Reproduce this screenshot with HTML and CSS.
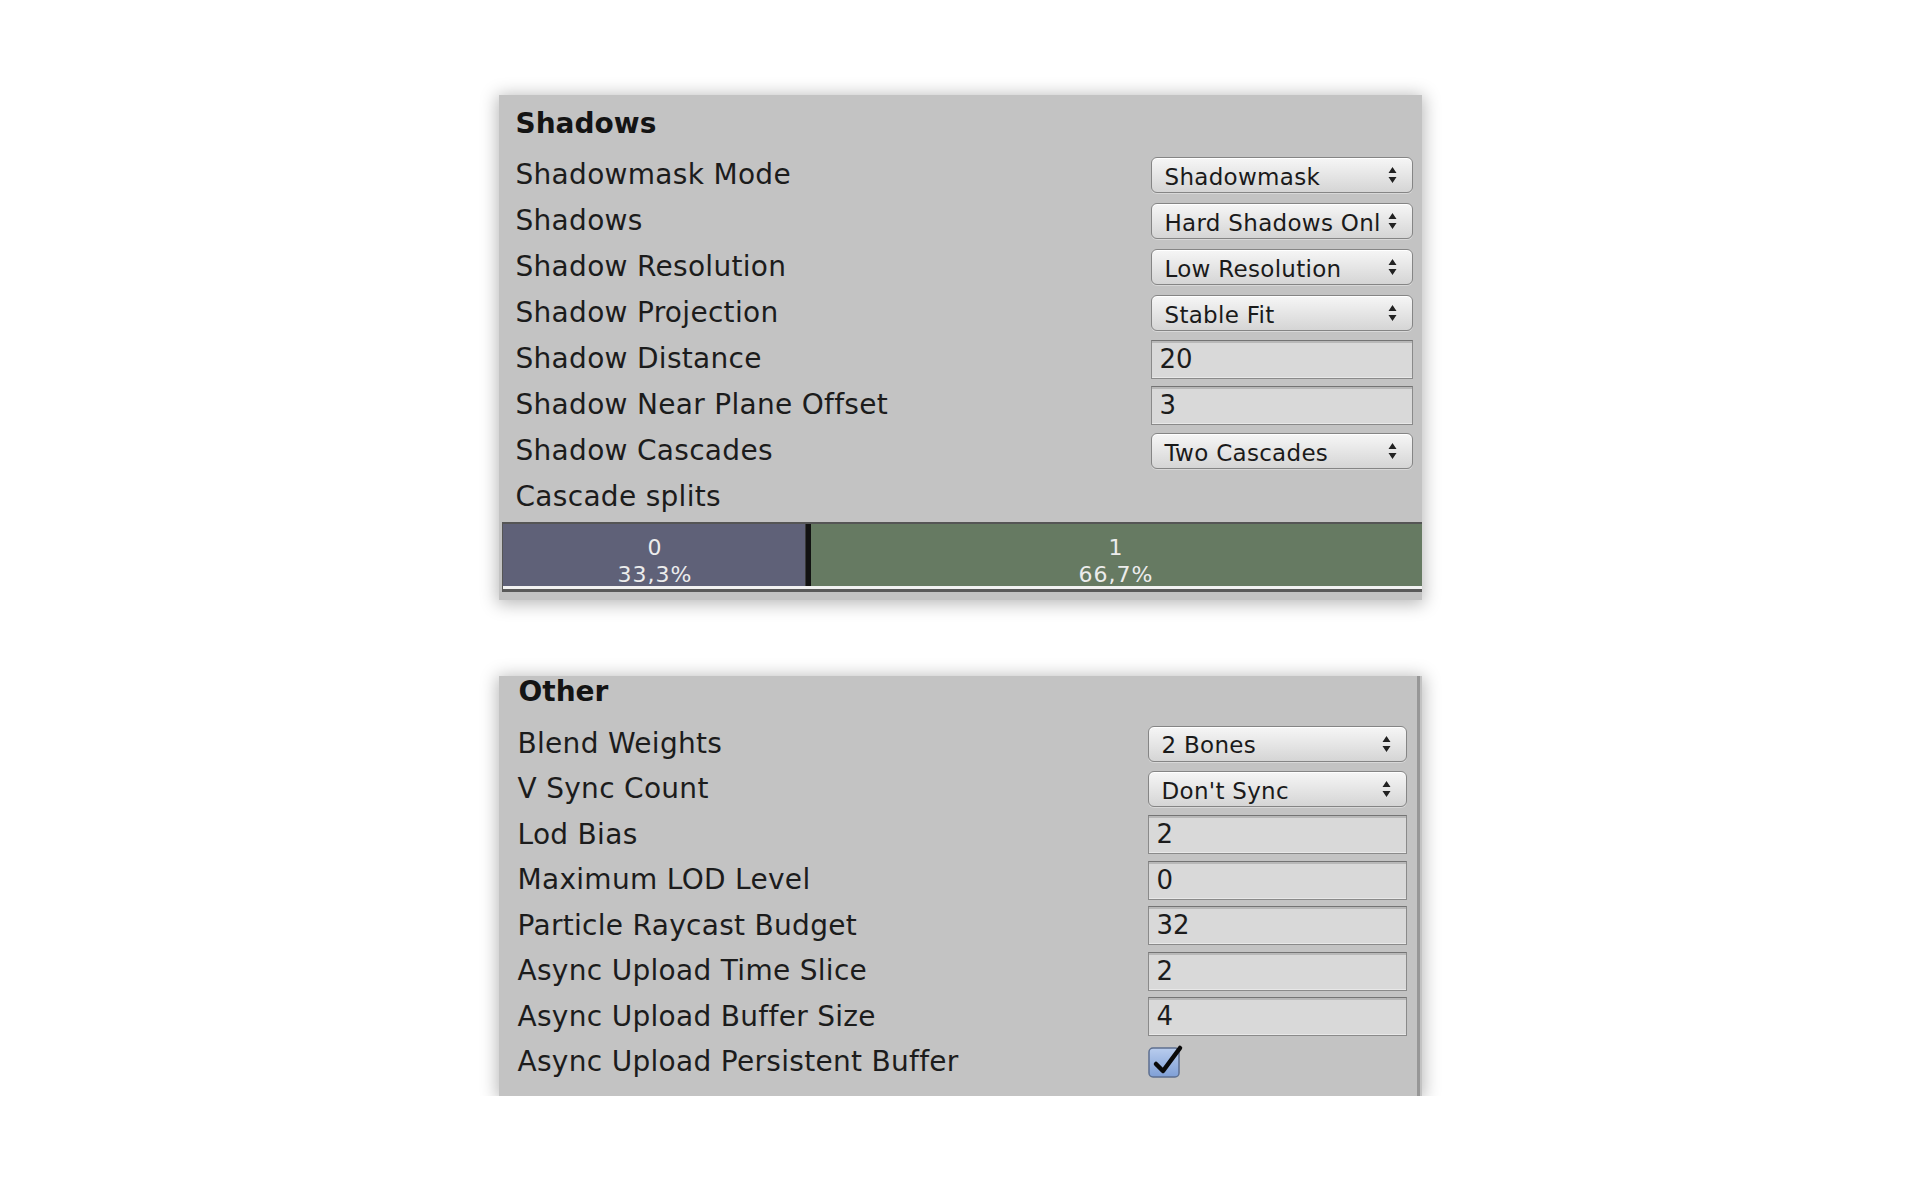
FILE: index.html
```html
<!DOCTYPE html>
<html>
<head>
<meta charset="utf-8">
<link rel="stylesheet" href="styles.css">
</head>
<body>
<div class="page">
  <section class="panel panel-shadows">
    <div class="header">Shadows</div>
    <div class="row"><span class="label">Shadowmask Mode</span><div class="select"><span>Shadowmask</span><svg class="arrows" width="9" height="16" viewBox="0 0 9 16"><path d="M4.5 0 L8.5 6 L0.5 6 Z M0.5 10 L8.5 10 L4.5 16 Z" fill="#222"/></svg></div></div>
    <div class="row"><span class="label">Shadows</span><div class="select"><span>Hard Shadows Onl</span><svg class="arrows" width="9" height="16" viewBox="0 0 9 16"><path d="M4.5 0 L8.5 6 L0.5 6 Z M0.5 10 L8.5 10 L4.5 16 Z" fill="#222"/></svg></div></div>
    <div class="row"><span class="label">Shadow Resolution</span><div class="select"><span>Low Resolution</span><svg class="arrows" width="9" height="16" viewBox="0 0 9 16"><path d="M4.5 0 L8.5 6 L0.5 6 Z M0.5 10 L8.5 10 L4.5 16 Z" fill="#222"/></svg></div></div>
    <div class="row"><span class="label">Shadow Projection</span><div class="select"><span>Stable Fit</span><svg class="arrows" width="9" height="16" viewBox="0 0 9 16"><path d="M4.5 0 L8.5 6 L0.5 6 Z M0.5 10 L8.5 10 L4.5 16 Z" fill="#222"/></svg></div></div>
    <div class="row"><span class="label">Shadow Distance</span><div class="field">20</div></div>
    <div class="row"><span class="label">Shadow Near Plane Offset</span><div class="field">3</div></div>
    <div class="row"><span class="label">Shadow Cascades</span><div class="select"><span>Two Cascades</span><svg class="arrows" width="9" height="16" viewBox="0 0 9 16"><path d="M4.5 0 L8.5 6 L0.5 6 Z M0.5 10 L8.5 10 L4.5 16 Z" fill="#222"/></svg></div></div>
    <div class="row"><span class="label">Cascade splits</span></div>
    <div class="cascade">
      <div class="cascade-track">
        <div class="seg seg-0" style="flex-grow:333"><span>0</span><span>33,3%</span></div>
        <div class="divider"></div>
        <div class="seg seg-1" style="flex-grow:667"><span>1</span><span>66,7%</span></div>
      </div>
    </div>
  </section>

  <section class="panel panel-other">
    <div class="header">Other</div>
    <div class="row"><span class="label">Blend Weights</span><div class="select"><span>2 Bones</span><svg class="arrows" width="9" height="16" viewBox="0 0 9 16"><path d="M4.5 0 L8.5 6 L0.5 6 Z M0.5 10 L8.5 10 L4.5 16 Z" fill="#222"/></svg></div></div>
    <div class="row"><span class="label">V Sync Count</span><div class="select"><span>Don't Sync</span><svg class="arrows" width="9" height="16" viewBox="0 0 9 16"><path d="M4.5 0 L8.5 6 L0.5 6 Z M0.5 10 L8.5 10 L4.5 16 Z" fill="#222"/></svg></div></div>
    <div class="row"><span class="label">Lod Bias</span><div class="field">2</div></div>
    <div class="row"><span class="label">Maximum LOD Level</span><div class="field">0</div></div>
    <div class="row"><span class="label">Particle Raycast Budget</span><div class="field">32</div></div>
    <div class="row"><span class="label">Async Upload Time Slice</span><div class="field">2</div></div>
    <div class="row"><span class="label">Async Upload Buffer Size</span><div class="field">4</div></div>
    <div class="row"><span class="label">Async Upload Persistent Buffer</span>
      <div class="check-slot">
        <svg class="checkbox" width="36" height="34" viewBox="0 0 36 34">
          <defs>
            <linearGradient id="cbg" x1="0" y1="0" x2="0" y2="1">
              <stop offset="0" stop-color="#b9cdee"/>
              <stop offset="1" stop-color="#7f9fd6"/>
            </linearGradient>
          </defs>
          <rect x="1" y="4" width="30" height="29" rx="4" fill="url(#cbg)" stroke="#5d6f90" stroke-width="1.5"/>
          <path d="M8 20 L15 27 L32 4" fill="none" stroke="#0a0a0a" stroke-width="4.5" stroke-linecap="round" stroke-linejoin="round"/>
        </svg>
      </div>
    </div>
  </section>
</div>
</body>
</html>
```

FILE: styles.css
```css
html, body {
  margin: 0;
  padding: 0;
  background: #ffffff;
}

body {
  font-family: "DejaVu Sans", Verdana, sans-serif;
  color: #1c1c1c;
}

.page {
  display: flex;
  flex-direction: column;
  align-items: center;
  gap: 76px;
  padding-top: 95px;
}

.panel {
  width: 923px;
  background: #c3c3c3;
  box-sizing: border-box;
  box-shadow: 0 2px 16px 2px rgba(0, 0, 0, 0.28);
}

.header {
  font-weight: bold;
  font-size: 28px;
  color: #141414;
}

.panel-shadows {
  padding-bottom: 8px;
}

.panel-shadows .header {
  height: 46px;
  line-height: 46px;
  margin-top: 6px;
  margin-bottom: 5px;
  padding-left: 17px;
}

.panel-shadows .row {
  height: 46px;
  padding: 0 9px 0 17px;
}

.panel-shadows .select,
.panel-shadows .field {
  width: 262px;
}

.panel-other {
  padding-bottom: 11px;
  box-shadow: inset -2px 0 0 #c3c3c3, inset -5px 0 0 #979797, 0 2px 16px 2px rgba(0, 0, 0, 0.28);
}

.panel-other .header {
  height: 32px;
  line-height: 32px;
  margin-bottom: 13px;
  padding-left: 20px;
}

.panel-other .row {
  height: 45.5px;
  padding: 0 15px 0 19px;
}

.panel-other .select,
.panel-other .field,
.panel-other .check-slot {
  width: 259px;
}

.row {
  display: flex;
  align-items: center;
  justify-content: space-between;
  box-sizing: border-box;
}

.label {
  font-size: 28px;
  line-height: 1;
  letter-spacing: 0.3px;
  color: #1c1c1c;
  white-space: nowrap;
}

.select {
  height: 36px;
  box-sizing: border-box;
  border: 1.5px solid #858585;
  border-radius: 6px;
  background: linear-gradient(#f6f6f6, #e4e4e4 55%, #d5d5d5);
  box-shadow: inset 0 1px 0 #ffffff, 0 1px 0 rgba(255, 255, 255, 0.35);
  display: flex;
  align-items: center;
  justify-content: space-between;
  padding: 3px 15px 0 13px;
  font-size: 23px;
  color: #1a1a1a;
  white-space: nowrap;
  overflow: hidden;
}

.select span {
  letter-spacing: 0.3px;
}

.arrows {
  flex: none;
  margin-top: -3px;
}

.field {
  height: 39px;
  box-sizing: border-box;
  border: 1.5px solid #8a8a8a;
  border-top-color: #747474;
  background: #d9d9d9;
  box-shadow: inset 0 2px 0 #b8b8b8, inset 0 -1px 0 #e8e8e8;
  padding: 1px 8px 0;
  font-size: 26px;
  line-height: 35px;
  color: #1c1c1c;
}

.check-slot {
  display: flex;
  align-items: center;
  height: 100%;
}

.checkbox {
  display: block;
  margin-top: -2px;
}

.cascade {
  margin: 2px 0 0 3px;
}

.cascade-track {
  display: flex;
  height: 70px;
  box-sizing: border-box;
  border-top: 2px solid #555555;
  border-left: 1px solid #555555;
  border-bottom: 3px solid #5a5a5a;
  box-shadow: inset 0 -3px 0 #f2f2f2;
  padding-bottom: 3px;
}

.seg {
  flex-basis: 0;
  display: flex;
  flex-direction: column;
  align-items: center;
  padding-top: 10px;
  box-sizing: border-box;
  font-size: 22px;
  line-height: 27px;
  letter-spacing: 1px;
  color: #ececec;
}

.seg-0 {
  background: #5f6178;
  margin-right: -3px;
}

.seg-1 {
  background: #667a62;
}

.divider {
  width: 6px;
  flex: none;
  background: #121212;
  border-left: 1px solid #3a3a3a;
  box-sizing: border-box;
  position: relative;
}
```
